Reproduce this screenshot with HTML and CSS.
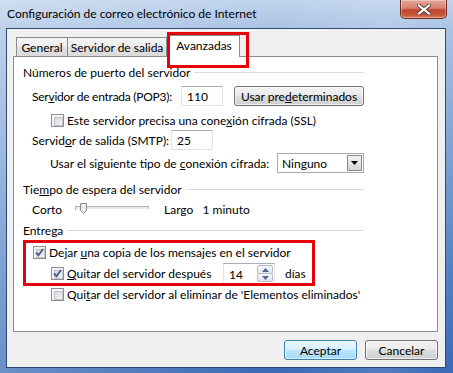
FILE: index.html
```html
<!DOCTYPE html>
<html lang="es">
<head>
<meta charset="utf-8">
<title>Configuración de correo electrónico de Internet</title>
<link rel="stylesheet" href="styles.css">
</head>
<body>
<div class="window">
  <div class="titlebar">
    <span class="title">Configuración de correo electrónico de Internet</span>
    <div class="close">
      <svg width="14" height="11" viewBox="0 0 14 11"><path d="M2 1.5 L12 9.5 M12 1.5 L2 9.5" stroke="#5a3a3a" stroke-width="4" stroke-linecap="square"/><path d="M2 1.5 L12 9.5 M12 1.5 L2 9.5" stroke="#ffffff" stroke-width="2.2" stroke-linecap="square"/></svg>
    </div>
  </div>
  <div class="client">
    <div class="tabs">
      <div class="tab tab-general">General</div>
      <div class="tab tab-salida">Servidor de salida</div>
      <div class="tab tab-avanzadas active highlight">Avanzadas</div>
    </div>
    <div class="panel">
      <div class="group">
        <span class="legend">Números de puerto del servidor</span><span class="rule"></span>
      </div>
      <div class="row row-pop">
        <span class="label w-pop">Ser<u>v</u>idor de entrada (POP3):</span>
        <span class="field f-pop">110</span>
        <span class="btn btn-def">Usar pre<u>d</u>eterminados</span>
      </div>
      <div class="row row-ssl indent2">
        <span class="cb"></span>
        <span class="cb-text">Este servidor precisa una cone<u>x</u>ión cifrada (SSL)</span>
      </div>
      <div class="row row-smtp">
        <span class="label w-smtp">Servid<u>o</u>r de salida (SMTP):</span>
        <span class="field f-smtp">25</span>
      </div>
      <div class="row row-tipo">
        <span class="label w-tipo">Usar el siguiente tipo de <u>c</u>onexión cifrada:</span>
        <span class="select">
          <span class="select-text">Ninguno</span>
          <span class="select-btn"><svg width="7" height="4" viewBox="0 0 7 4"><path d="M0 0 H7 L3.5 4 Z" fill="#000"/></svg></span>
        </span>
      </div>
      <div class="group g2">
        <span class="legend">Tie<u>m</u>po de espera del servidor</span><span class="rule"></span>
      </div>
      <div class="row row-corto">
        <span class="label w-corto">Corto</span>
        <svg class="slider" width="75" height="12" viewBox="0 0 75 12">
          <rect x="0.5" y="4.5" width="73" height="3" fill="#e7eaea" stroke="#b6b6b6"/>
          <line x1="1" y1="7.5" x2="74" y2="7.5" stroke="#ffffff"/>
          <path d="M5.5 1.5 H11.5 V8.5 L8.5 11.5 L5.5 8.5 Z" fill="#ececec" stroke="#8a8a8a"/>
          <line x1="6.5" y1="2.5" x2="10.5" y2="2.5" stroke="#ffffff"/>
        </svg>
        <span class="largo">Largo&nbsp;&nbsp;&nbsp;1 minuto</span>
      </div>
      <div class="group g3">
        <span class="legend">Entrega</span><span class="rule"></span>
      </div>
      <div class="entrega">
        <div class="row row-cb1 indent1">
          <span class="cb checked"><svg width="9" height="9" viewBox="0 0 9 9"><path d="M1 4.5 L3.5 7.2 L8 1" fill="none" stroke="#4a5f8f" stroke-width="1.9"/></svg></span>
          <span class="cb-text">Dejar <u>u</u>na copia de los mensajes en el servidor</span>
        </div>
        <div class="row row-cb2 indent2">
          <span class="cb checked"><svg width="9" height="9" viewBox="0 0 9 9"><path d="M1 4.5 L3.5 7.2 L8 1" fill="none" stroke="#4a5f8f" stroke-width="1.9"/></svg></span>
          <span class="cb-text w-quitar"><u>Q</u>uitar del servidor después</span>
          <span class="spin">
            <span class="spin-text">14</span>
            <span class="spin-btns">
              <span class="spin-up"><svg width="7" height="4" viewBox="0 0 7 4"><path d="M0 4 H7 L3.5 0 Z" fill="#4d6a96"/></svg></span>
              <span class="spin-down"><svg width="7" height="4" viewBox="0 0 7 4"><path d="M0 0 H7 L3.5 4 Z" fill="#4d6a96"/></svg></span>
            </span>
          </span>
          <span class="dias">días</span>
        </div>
        <div class="highlight-box"></div>
      </div>
      <div class="row row-cb3 indent2">
        <span class="cb"></span>
        <span class="cb-text">Qui<u>t</u>ar del servidor al eliminar de 'Elementos eliminados'</span>
      </div>
    </div>
    <div class="buttons">
      <span class="btn btn-ok default">Aceptar</span>
      <span class="btn btn-ok">Cancelar</span>
    </div>
  </div>
</div>
</body>
</html>
```
FILE: styles.css
```css
* { box-sizing: border-box; }
html, body { margin: 0; padding: 0; }
body {
  font-family: Lato, "Liberation Sans", sans-serif;
  font-size: 12px;
  color: #000;
  background: #ffffff;
}
u { text-decoration: underline; text-underline-offset: 1px; }

.window {
  width: 453px;
  height: 373px;
  display: flex;
  flex-direction: column;
  padding: 0 7px 5px 6px;
  background:
    linear-gradient(90deg, rgba(255,255,255,0.25) 0%, rgba(255,255,255,0) 60%, rgba(255,255,255,0.12) 85%, rgba(255,255,255,0) 100%),
    linear-gradient(180deg, #bfd3ec 0%, #a9c2e4 8%, #7ea2d4 40%, #4f7fc2 75%, #3a6ab5 100%);
}

.titlebar {
  height: 28px;
  display: flex;
  align-items: flex-start;
  justify-content: space-between;
  flex: none;
}
.title {
  padding-top: 6px;
  padding-left: 1px;
  white-space: nowrap;
  color: #000;
}
.close {
  width: 47px;
  height: 19px;
  margin-right: -1px;
  border: 1px solid #6b2a23;
  border-top: none;
  border-radius: 0 0 5px 5px;
  background: linear-gradient(180deg, #e6a596 0%, #d88370 45%, #c2432b 55%, #c85a3c 85%, #e07d5a 100%);
  box-shadow: inset 0 0 0 1px rgba(255,255,255,0.35);
  display: flex;
  align-items: center;
  justify-content: center;
}

.client {
  flex: 1;
  border: 1px solid #2e4a76;
  background: #f0f0f0;
  display: flex;
  flex-direction: column;
}

.tabs {
  display: flex;
  align-items: flex-end;
  height: 21px;
  margin-top: 6px;
  padding-left: 9px;
}
.tab {
  height: 19px;
  border: 1px solid #898c95;
  border-bottom: none;
  background: linear-gradient(180deg, #f4f4f4 0%, #ececec 50%, #e2e2e2 51%, #dadada 100%);
  display: flex;
  align-items: center;
  justify-content: center;
  padding-top: 1px;
  white-space: nowrap;
}
.tab-general { width: 52px; }
.tab-salida { width: 99px; border-left: none; }
.tab-avanzadas { width: 72px; }
.tab.active {
  height: 22px;
  margin-bottom: -1px;
  margin-left: 1px;
  background: #ffffff;
  position: relative;
  z-index: 2;
  padding-top: 0;
  padding-bottom: 2px;
}
.highlight::after {
  content: "";
  position: absolute;
  left: -2px;
  top: -4px;
  width: 76px;
  height: 30px;
  border: 3px solid #e8000b;
}

.panel {
  height: 276px;
  margin: 0 7px 0 6px;
  border: 1px solid #898c95;
  background: #ffffff;
  padding: 7px 0 0 9px;
  flex: none;
}

.group {
  width: 341px;
  height: 16px;
  display: flex;
  align-items: center;
}
.legend { white-space: nowrap; }
.rule {
  flex: 1;
  height: 1px;
  margin-left: 4px;
  margin-top: 1px;
  background: #d5dfe5;
}
.g2 { margin-top: 8px; }
.g3 { margin-top: 5px; }

.row {
  display: flex;
  align-items: center;
  white-space: nowrap;
}
.row-pop { height: 20px; margin-top: 6px; padding-left: 9px; }
.row-ssl { height: 16px; margin-top: 6px; }
.row-smtp { height: 20px; margin-top: 2px; padding-left: 9px; }
.row-tipo { height: 20px; margin-top: 3px; padding-left: 27px; }
.row-corto { height: 16px; margin-top: 4px; padding-left: 9px; }
.row-cb1 { height: 16px; }
.row-cb2 { height: 21px; margin-top: 3px; }
.row-cb3 { height: 16px; margin-top: 2px; }

.indent1 { padding-left: 10px; }
.indent2 { padding-left: 28px; }

.label { display: inline-block; flex: none; min-width: 0; }
.w-pop { width: 149px; letter-spacing: -0.25px; }
.w-smtp { width: 139px; }
.w-tipo { width: 227px; }
.w-corto { width: 43px; }
.w-quitar { width: 156px; }

.field {
  height: 20px;
  width: 42px;
  flex: none;
  border: 1px solid #dbdfe6;
  border-top-color: #abadb3;
  border-left-color: #e2e3ea;
  border-right-color: #e2e3ea;
  background: #fff;
  padding-left: 5px;
  display: flex;
  align-items: center;
}

.btn {
  display: inline-flex;
  align-items: center;
  justify-content: center;
  height: 20px;
  border: 1px solid #707070;
  border-radius: 3px;
  background: linear-gradient(180deg, #f2f2f2 0%, #ebebeb 45%, #dddddd 50%, #cfcfcf 100%);
  box-shadow: inset 0 0 0 1px rgba(255,255,255,0.7);
}
.btn-def { width: 130px; margin-left: 11px; }

.cb {
  width: 13px;
  height: 13px;
  flex: none;
  border: 1px solid #8e8f8f;
  background: #f4f4f4;
  padding: 1px;
  position: relative;
  display: inline-flex;
  align-items: center;
  justify-content: center;
}
.cb::before {
  content: "";
  position: absolute;
  left: 2px;
  top: 2px;
  width: 7px;
  height: 7px;
  border: 1px solid #c0c4ca;
  background: linear-gradient(135deg, #d3d6db 0%, #f6f6f6 100%);
}
.cb svg { position: relative; z-index: 1; }
.cb-text { margin-left: 3px; display: inline-block; }

.select {
  width: 87px;
  height: 20px;
  border: 1px solid #a9a9a9;
  background: #fff;
  display: flex;
  align-items: center;
  justify-content: space-between;
  padding: 1px;
}
.select-text { padding-left: 3px; }
.select-btn {
  width: 15px;
  height: 16px;
  border: 1px solid #8a8a8a;
  background: linear-gradient(180deg, #f2f2f2 0%, #e4e4e4 50%, #d6d6d6 100%);
  display: flex;
  align-items: center;
  justify-content: center;
}

.slider { flex: none; margin-top: -2px; }
.largo { margin-left: 14px; }

.entrega { position: relative; padding-top: 6px; }
.highlight-box {
  position: absolute;
  left: 0;
  top: 2px;
  width: 292px;
  height: 46px;
  border: 3px solid #e8000b;
  pointer-events: none;
}

.spin {
  width: 52px;
  height: 21px;
  border: 1px solid #dbdfe6;
  border-top-color: #abadb3;
  border-left-color: #e2e3ea;
  border-right-color: #e2e3ea;
  background: #fff;
  display: flex;
  justify-content: space-between;
  padding: 1px;
}
.spin-text { padding-left: 4px; display: flex; align-items: center; padding-top: 1px; }
.spin-btns {
  width: 16px;
  display: flex;
  flex-direction: column;
}
.spin-up, .spin-down {
  flex: 1;
  border: 1px solid #b5bcc7;
  border-radius: 2px;
  background: linear-gradient(180deg, #f4f6f9 0%, #e3e7ed 100%);
  display: flex;
  align-items: center;
  justify-content: center;
}
.spin-down { margin-top: -1px; }
.dias { margin-left: 10px; }

.buttons {
  display: flex;
  justify-content: flex-end;
  gap: 8px;
  margin-top: 8px;
  padding-right: 7px;
}
.btn-ok { width: 73px; }
.btn.default {
  border-color: #3c7fb1;
  background: linear-gradient(180deg, #eaf6fd 0%, #d9f0fc 45%, #bee6fd 50%, #a7d9f5 100%);
  box-shadow: inset 0 0 0 1px rgba(255,255,255,0.6);
}
```
